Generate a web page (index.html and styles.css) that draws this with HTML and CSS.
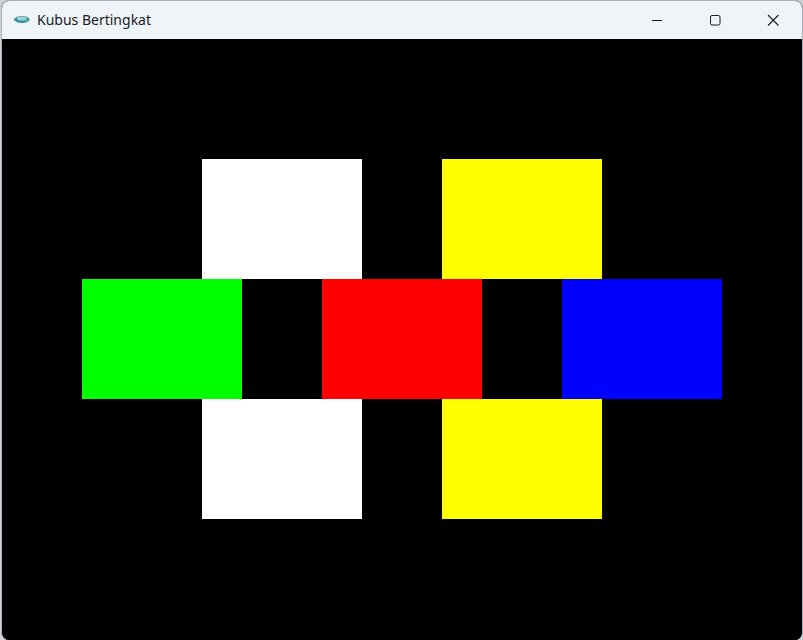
FILE: index.html
```html
<!DOCTYPE html>
<html>
<head>
<meta charset="utf-8">
<title>Kubus Bertingkat</title>
<link rel="stylesheet" href="styles.css">
</head>
<body>
<div class="window">
  <div class="titlebar">
    <div class="title-left">
      <svg class="app-icon" width="18" height="12" viewBox="0 0 18 12">
        <ellipse cx="9" cy="6.5" rx="7.5" ry="3.5" fill="#3a8f9c"/>
        <ellipse cx="9" cy="5.5" rx="5" ry="2" fill="#9fd3da"/>
        <path d="M12 6 L17 7.5 L12 8.5 Z" fill="#5aa7b3"/>
        <path d="M2 5 Q0.5 6.5 2.5 8" stroke="#3a8f9c" stroke-width="1" fill="none"/>
      </svg>
      <span class="title-text">Kubus Bertingkat</span>
    </div>
    <div class="controls">
      <div class="ctl">
        <svg width="12" height="12" viewBox="0 0 12 12"><path d="M1 6.5 H11" stroke="#1b1b1b" stroke-width="1"/></svg>
      </div>
      <div class="ctl">
        <svg width="12" height="12" viewBox="0 0 12 12"><rect x="1.5" y="1.5" width="9.5" height="9.5" rx="1.5" stroke="#1b1b1b" stroke-width="1" fill="none"/></svg>
      </div>
      <div class="ctl">
        <svg width="12" height="12" viewBox="0 0 12 12"><path d="M1 1 L11.5 11.5 M11.5 1 L1 11.5" stroke="#1b1b1b" stroke-width="1.1"/></svg>
      </div>
    </div>
  </div>
  <div class="client">
    <div class="cubes">
      <div class="face white top-a"></div>
      <div class="face yellow top-b"></div>
      <div class="face green mid-a"></div>
      <div class="face red mid-b"></div>
      <div class="face blue mid-c"></div>
      <div class="face white bot-a"></div>
      <div class="face yellow bot-b"></div>
    </div>
  </div>
</div>
</body>
</html>
```
FILE: styles.css
```css
html, body {
  margin: 0;
  padding: 0;
}
body {
  background: #cfd3d8;
  width: 803px;
  height: 640px;
  overflow: hidden;
}
.window {
  margin-left: 1px;
  width: 800px;
  border: 1px solid #a9aeb4;
  border-bottom: none;
  border-radius: 8px;
  overflow: hidden;
  background: #000;
}
.titlebar {
  height: 38px;
  background: #eff4f9;
  display: flex;
  justify-content: space-between;
  align-items: stretch;
}
.title-left {
  display: flex;
  align-items: center;
  padding-left: 11px;
  gap: 6px;
}
.app-icon {
  display: block;
  margin-top: -2px;
}
.title-text {
  font-family: "Noto Sans", "Open Sans", sans-serif;
  font-size: 14px;
  color: #1a1a1a;
  margin-top: -1px;
}
.controls {
  display: flex;
}
.ctl {
  width: 58px;
  display: flex;
  align-items: center;
  justify-content: center;
}
.ctl svg {
  display: block;
}
.client {
  height: 601px;
  background: #000;
  display: flex;
  justify-content: center;
  align-items: flex-start;
  padding-top: 120px;
  box-sizing: border-box;
}
.cubes {
  display: grid;
  grid-template-columns: repeat(16, 40px);
  grid-template-rows: repeat(3, 120px);
}
.white { background: #ffffff; }
.yellow { background: #ffff00; }
.green { background: #00ff00; }
.red { background: #ff0000; }
.blue { background: #0000ff; }
.top-a { grid-row: 1; grid-column: 4 / span 4; }
.top-b { grid-row: 1; grid-column: 10 / span 4; }
.mid-a { grid-row: 2; grid-column: 1 / span 4; }
.mid-b { grid-row: 2; grid-column: 7 / span 4; }
.mid-c { grid-row: 2; grid-column: 13 / span 4; }
.bot-a { grid-row: 3; grid-column: 4 / span 4; }
.bot-b { grid-row: 3; grid-column: 10 / span 4; }
```
